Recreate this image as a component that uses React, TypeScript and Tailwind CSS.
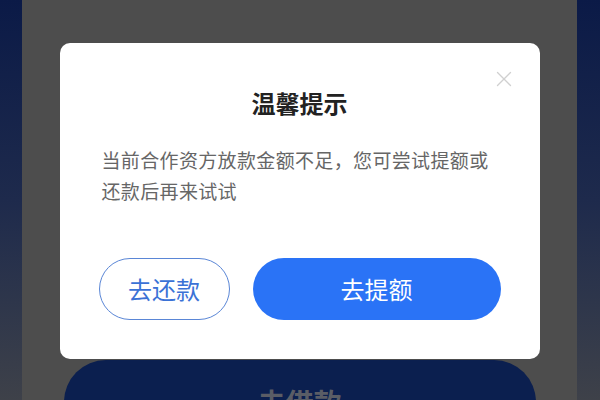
import { X } from 'lucide-react';

const FONT = { fontFamily: '"Noto Sans CJK SC", "Noto Sans", sans-serif' };

export default function App() {
  return (
    <div className="w-[600px] h-[400px] overflow-hidden flex" style={FONT}>
      {/* 左侧背景 */}
      <div className="w-[22px] h-full bg-gradient-to-b from-[#0b1a47] via-[#1e2a4c] to-[#3e4149]" />

      {/* 遮罩中间区 */}
      <div className="flex-1 h-full bg-[#4d4d4d] flex flex-col items-center pt-[43px]">
        {/* 弹窗 */}
        <div className="relative w-[480px] h-[316px] shrink-0 bg-white rounded-[10px] flex flex-col">
          <button className="absolute top-[23px] right-[23px] text-[#d0d0d0]">
            <X className="w-[26px] h-[26px]" strokeWidth={1.2} />
          </button>
          <h2 className="mt-[44px] text-center text-[24px] leading-[32px] font-bold text-[#222222]">温馨提示</h2>
          <p className="mt-[25px] pl-[42px] pr-[38px] text-[19px] leading-[31px] tracking-[0.35px] text-[#666666]">
            当前合作资方放款金额不足，您可尝试提额或还款后再来试试
          </p>
          <div className="mt-[52px] px-[39px] flex gap-[23px]">
            <button className="w-[131px] h-[62px] rounded-full border-[1.5px] border-[#5a86d6] text-[#3b72d6] text-[24px] flex items-center justify-center">
              去还款
            </button>
            <button className="flex-1 h-[62px] rounded-full bg-[#2a73f6] text-white text-[24px] flex items-center justify-center">
              去提额
            </button>
          </div>
        </div>

        {/* 底部按钮（被遮罩） */}
        <div className="mt-[1px] w-[472px] h-[84px] shrink-0 rounded-[42px] bg-[#0b1f4f] flex items-center justify-center">
          <span className="text-[28px] font-bold text-[#5a5d66]">去借款</span>
        </div>
      </div>

      {/* 右侧背景 */}
      <div className="w-[23px] h-full bg-gradient-to-b from-[#0b1a47] via-[#1e2a4c] to-[#3e4149]" />
    </div>
  );
}
